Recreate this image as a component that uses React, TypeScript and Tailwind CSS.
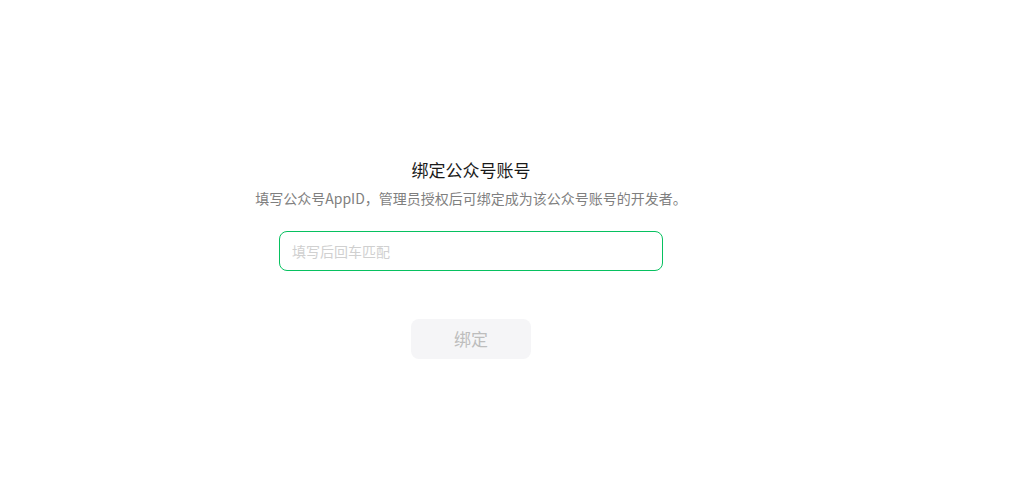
import { useState } from 'react'

export default function App() {
  const [appId, setAppId] = useState('')

  return (
    <div
      className="min-h-[495px] bg-white"
      style={{ fontFamily: '"Noto Sans CJK SC", "Noto Sans", sans-serif' }}
    >
      <div className="w-[942px] pt-[158px] flex flex-col items-center">
        <h1 className="text-[17px] leading-6 font-normal text-[#1a1a1a]">绑定公众号账号</h1>
        <p className="mt-[5px] text-[14px] leading-[22px] text-[#7f7f7f]">
          填写公众号AppID，管理员授权后可绑定成为该公众号账号的开发者。
        </p>

        <input
          autoFocus
          value={appId}
          onChange={(e) => setAppId(e.target.value)}
          placeholder="填写后回车匹配"
          className="mt-[22px] w-[384px] h-10 px-3 rounded-lg border border-[#07c160] text-[14px] text-[#1a1a1a] caret-black placeholder:text-[#d0d0d0] outline-none"
        />

        <button
          disabled={!appId}
          className="mt-12 w-[120px] h-10 rounded-lg bg-[#f5f5f7] text-[17px] text-[#bdbdbd]"
        >
          绑定
        </button>
      </div>
    </div>
  )
}
